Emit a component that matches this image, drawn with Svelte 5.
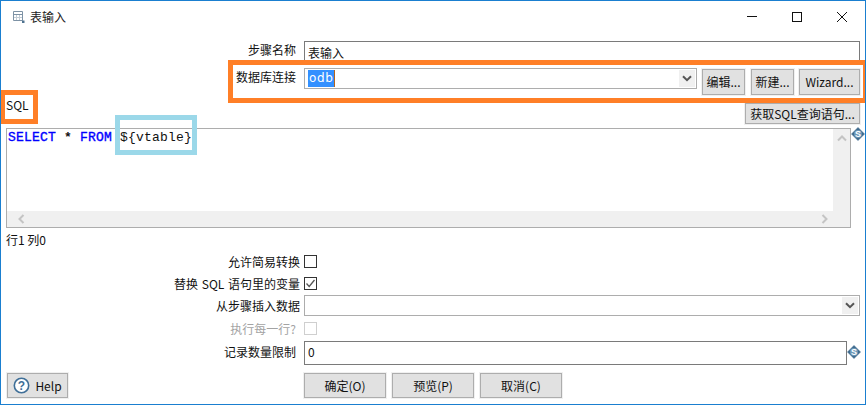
<script>
  const keywordA = 'SELECT';
  const keywordB = 'FROM';
</script>

{#snippet varIcon()}
  <svg class="var" width="14" height="14" viewBox="0 0 14 14" aria-hidden="true">
    <path d="M7 0.5 L13.5 7 L7 13.5 L0.5 7 Z" fill="#3d6a8e" stroke="#3d6a8e" stroke-linejoin="round" stroke-width="0.6" />
    <circle cx="7" cy="7" r="4" fill="#6d98b8" />
    <text x="7" y="10" text-anchor="middle" class="var-s">S</text>
  </svg>
{/snippet}

{#snippet chevron()}
  <svg width="10" height="7" viewBox="0 0 10 7" aria-hidden="true">
    <path d="M1 1.2 L5 5.2 L9 1.2" fill="none" stroke="#555" stroke-width="2" />
  </svg>
{/snippet}

<div class="window">
  <header class="title">
    <svg class="title-icon" width="14" height="14" viewBox="0 0 14 14" aria-hidden="true">
      <path d="M1.5 1.5 H10.5 V10.5 H1.5 Z" fill="#fff" stroke="#7d92a5" stroke-width="1" />
      <path d="M1.5 4.5 H10.5" stroke="#7d92a5" stroke-width="1" />
      <path d="M2 7.5 H10 M4.5 5 V10 M7.5 5 V10" stroke="#c2ccd5" stroke-width="1" />
      <rect x="10" y="10.5" width="2.5" height="2.5" fill="#4f7390" />
    </svg>
    <span class="title-text">表输入</span>
    <div class="controls">
      <svg width="12" height="12" viewBox="0 0 12 12" aria-hidden="true"><path d="M1 5.5 H11" stroke="#111" stroke-width="1" /></svg>
      <svg width="12" height="12" viewBox="0 0 12 12" aria-hidden="true"><rect x="1.5" y="1.5" width="9" height="9" fill="none" stroke="#111" /></svg>
      <svg width="12" height="12" viewBox="0 0 12 12" aria-hidden="true"><path d="M1 1 L11 11 M11 1 L1 11" stroke="#111" stroke-width="1" /></svg>
    </div>
  </header>

  <div class="row step-row">
    <label class="lbl" for="step">步骤名称</label>
    <div class="field dark step" id="step">表输入</div>
  </div>

  <div class="row db-row">
    <span class="lbl">数据库连接</span>
    <div class="field combo db"><span class="sel">odb</span><span class="drop">{@render chevron()}</span></div>
    <button class="btn b-edit">编辑...</button>
    <button class="btn b-new">新建...</button>
    <button class="btn b-wiz">Wizard...</button>
  </div>

  <div class="sql-head">
    <span class="sql-label">SQL</span>
    <button class="btn b-sql">获取SQL查询语句...</button>
  </div>

  <div class="editor-row">
    <div class="editor">
      <div class="code-area">
        <div class="code"><span class="kw">{keywordA}</span> <b>*</b> <span class="kw">{keywordB}</span> {'${vtable}'}</div>
        <div class="vbar">
          <svg width="10" height="7" viewBox="0 0 10 7" aria-hidden="true"><path d="M1 5.5 L5 1.5 L9 5.5" fill="none" stroke="#c4c4c4" stroke-width="2" /></svg>
        </div>
      </div>
      <div class="hbar">
        <svg width="7" height="10" viewBox="0 0 7 10" aria-hidden="true"><path d="M5.5 1 L1.5 5 L5.5 9" fill="none" stroke="#c4c4c4" stroke-width="2" /></svg>
        <svg width="7" height="10" viewBox="0 0 7 10" aria-hidden="true"><path d="M1.5 1 L5.5 5 L1.5 9" fill="none" stroke="#c4c4c4" stroke-width="2" /></svg>
      </div>
    </div>
    {@render varIcon()}
  </div>

  <div class="pos">行1 列0</div>

  <div class="row opt r1">
    <span class="lbl opt-lbl">允许简易转换</span>
    <span class="check"></span>
  </div>
  <div class="row opt r2">
    <span class="lbl opt-lbl wide">替换 SQL 语句里的变量</span>
    <span class="check">
      <svg width="13" height="13" viewBox="0 0 13 13" aria-hidden="true"><path d="M2.5 6.5 L5.2 9.5 L10.5 3" fill="none" stroke="#555" stroke-width="1.3" /></svg>
    </span>
  </div>
  <div class="row r3">
    <span class="lbl">从步骤插入数据</span>
    <div class="field combo from"><span class="drop">{@render chevron()}</span></div>
  </div>
  <div class="row opt r4">
    <span class="lbl opt-lbl off">执行每一行?</span>
    <span class="check off-box"></span>
  </div>
  <div class="row r5">
    <span class="lbl lim">记录数量限制</span>
    <div class="field dark limit">0</div>
    {@render varIcon()}
  </div>

  <footer class="foot">
    <button class="btn help">
      <svg width="17" height="17" viewBox="0 0 17 17" aria-hidden="true">
        <circle cx="8.5" cy="8.5" r="7.2" fill="#fff" stroke="#3f6f98" stroke-width="1.6" />
        <text x="8.5" y="13" text-anchor="middle" class="q">?</text>
      </svg>
      Help
    </button>
    <div class="actions">
      <button class="btn act">确定(O)</button>
      <button class="btn act">预览(P)</button>
      <button class="btn act">取消(C)</button>
    </div>
  </footer>

  <div class="mark orange m-sql"></div>
  <div class="mark orange m-db"></div>
  <div class="mark blue m-var"></div>
</div>

<style>
  :global(body) { margin: 0; background: #fff; }
  .window {
    position: relative;
    box-sizing: border-box;
    width: 866px;
    height: 405px;
    border: 1px solid #1a7fd0;
    background: #fff;
    overflow: hidden;
    font: 12px/16px "Noto Sans CJK SC", "Liberation Sans", sans-serif;
    color: #111;
  }
  .title {
    display: flex;
    align-items: center;
    height: 32px;
    padding-left: 11px;
  }
  .title-text { margin-left: 4px; color: #222; }
  .title-icon { flex: none; }
  .controls {
    margin-left: auto;
    display: flex;
    gap: 33px;
    padding-right: 17px;
  }
  .row { display: flex; align-items: flex-start; }
  .lbl { width: 295px; text-align: right; flex: none; }
  .step-row { height: 27px; margin-top: 8px; }
  .step-row .lbl { padding-top: 1px; }
  .db-row { height: 33px; }
  .db-row .lbl { padding-top: 1px; }
  .field {
    box-sizing: border-box;
    margin-left: 8px;
    background: #fff;
    border: 1px solid #adadad;
    padding-left: 3px;
  }
  .dark { border-color: #7a7a7a; }
  .step { width: 556px; height: 22px; padding-top: 3px; }
  .combo { display: flex; align-items: flex-start; position: relative; }
  .db { width: 393px; height: 21px; padding-top: 1px; }
  .sel {
    background: #3390ff;
    color: #fff;
    height: 17px;
    font: 12px/17px "DejaVu Sans", sans-serif;
    letter-spacing: 0.6px;
    padding: 0 1px;
    border-right: 1px solid #b5651d;
  }
  .drop {
    position: absolute;
    right: 1px;
    top: 1px;
    bottom: 1px;
    width: 16px;
    background: #f0f0f0;
    display: flex;
    align-items: center;
    justify-content: center;
  }
  .btn {
    box-sizing: border-box;
    height: 26px;
    padding: 0;
    background: #e1e1e1;
    border: 1px solid #adadad;
    outline: 1px solid #f0f0f0;
    font: inherit;
    color: #111;
    flex: none;
  }
  .b-edit { width: 43px; margin-left: 5px; margin-top: 1px; }
  .b-new { width: 43px; margin-left: 6px; margin-top: 1px; }
  .b-wiz { width: 61px; margin-left: 5px; margin-top: 1px; }
  .sql-head { display: flex; justify-content: space-between; height: 25px; padding-left: 5px; padding-right: 5px; margin-top: 2px; }
  .sql-label { margin-top: -6px; }
  .b-sql { width: 115px; height: 21px; margin-top: 0; line-height: 14px; }
  .editor-row { display: flex; align-items: flex-start; padding-left: 5px; height: 100px; }
  .editor {
    box-sizing: border-box;
    width: 846px;
    height: 100px;
    border: 1px solid #adadad;
    display: flex;
    flex-direction: column;
  }
  .code-area { flex: 1; display: flex; min-height: 0; }
  .code {
    flex: 1;
    padding: 1px 0 0 1px;
    font: 13px/15px "Liberation Mono", monospace;
    letter-spacing: 0.2px;
    color: #111;
    white-space: pre;
  }
  .kw { color: #0000ff; -webkit-text-stroke: 0.35px #0000ff; }
  .vbar {
    width: 17px;
    background: #f0f0f0;
    display: flex;
    justify-content: center;
    padding-top: 6px;
    box-sizing: border-box;
  }
  .hbar {
    height: 16px;
    background: #f0f0f0;
    display: flex;
    justify-content: space-between;
    align-items: center;
    padding: 0 22px 0 11px;
  }
  .var { flex: none; margin-top: -1px; }
  .var-s { font: bold 9px "Liberation Sans", sans-serif; fill: #fff; }
  .pos { padding-left: 5px; margin-top: 4px; height: 17px; }
  .opt { height: 21px; align-items: center; }
  .opt-lbl { padding-right: 4px; width: 299px; }
  .wide { word-spacing: 1px; }
  .r1 { margin-top: 2px; }
  .r2 { margin-top: 1px; }
  .check {
    box-sizing: border-box;
    width: 13px;
    height: 13px;
    border: 1px solid #333;
    background: #fff;
    display: flex;
    align-items: center;
    justify-content: center;
    flex: none;
  }
  .check svg { flex: none; }
  .r3 { height: 27px; margin-top: 1px; }
  .r3 .lbl { padding-top: 3px; width: 299px; }
  .from { width: 556px; height: 21px; margin-left: 4px; }
  .r4 { height: 13px; }
  .off { color: #a3a3a3; padding-right: 8px; width: 295px; }
  .off-box { border-color: #cfcfcf; }
  .r5 { height: 32px; margin-top: 6px; }
  .r5 .lbl { padding-top: 3px; }
  .limit { width: 543px; height: 24px; padding-top: 2px; }
  .r5 .var { margin-top: 4px; }
  .foot { display: flex; align-items: flex-start; padding-left: 6px; }
  .help {
    width: 61px;
    height: 25px;
    display: flex;
    align-items: center;
    justify-content: center;
    gap: 5px;
  }
  .q { font: bold 12px "Liberation Sans", sans-serif; fill: #3f6f98; }
  .actions { display: flex; gap: 6px; margin-left: 236px; }
  .act { width: 82px; height: 25px; }
  .mark { position: absolute; box-sizing: border-box; pointer-events: none; }
  .orange { border: 5px solid #ff7f27; }
  .blue { border: 5px solid #9bd8e9; }
  .m-sql { left: -1px; top: 89px; width: 38px; height: 34px; }
  .m-db { left: 227px; top: 59px; width: 640px; height: 43px; }
  .m-var { left: 114px; top: 114px; width: 82px; height: 40px; }
</style>
